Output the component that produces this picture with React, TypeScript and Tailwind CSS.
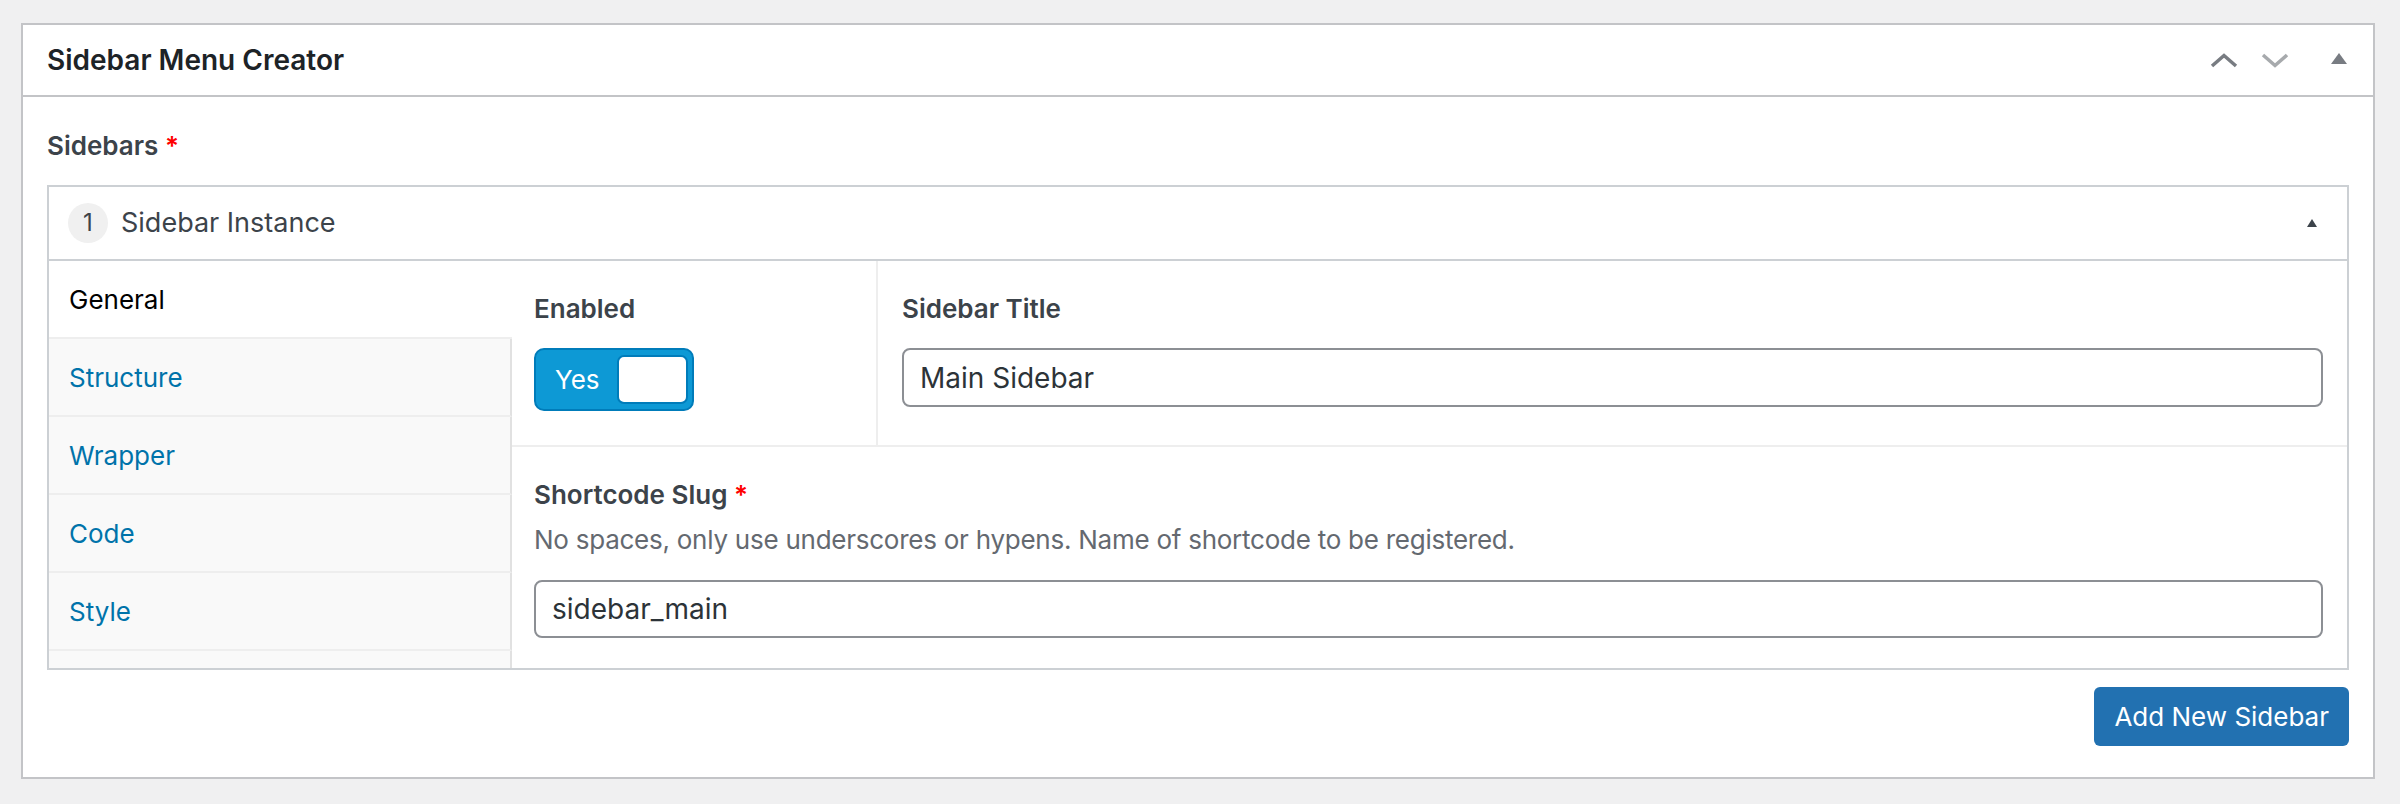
const tabs = ['General', 'Structure', 'Wrapper', 'Code', 'Style']

function ChevronUp({ color }: { color: string }) {
  return (
    <svg width="28" height="15" viewBox="0 0 28 15" fill="none">
      <path d="M2 13 L14 2.5 L26 13" stroke={color} strokeWidth="3.5" />
    </svg>
  )
}

function ChevronDown({ color }: { color: string }) {
  return (
    <svg width="28" height="15" viewBox="0 0 28 15" fill="none">
      <path d="M2 2 L14 12.5 L26 2" stroke={color} strokeWidth="3.5" />
    </svg>
  )
}

function Triangle({ w, h, color }: { w: number; h: number; color: string }) {
  return (
    <svg width={w} height={h} viewBox={`0 0 ${w} ${h}`}>
      <polygon points={`0,${h} ${w / 2},0 ${w},${h}`} fill={color} />
    </svg>
  )
}

export default function App() {
  return (
    <div className="min-h-screen bg-[#f0f0f1] pt-[23px] pl-[21px] pr-[25px] font-[Inter,sans-serif]">
      <div className="border-2 border-[#c3c4c7] bg-white">
        {/* Header */}
        <div className="flex h-[72px] items-center justify-between border-b-2 border-[#c3c4c7] pl-[24px] pr-[26px]">
          <h2 className="text-[28px] font-semibold text-[#1d2327]">Sidebar Menu Creator</h2>
          <div className="flex items-center">
            <ChevronUp color="#787c82" />
            <div className="ml-[23px]">
              <ChevronDown color="#a7aaad" />
            </div>
            <div className="ml-[42px] mb-[3px]">
              <Triangle w={16} h={11} color="#787c82" />
            </div>
          </div>
        </div>

        {/* Body */}
        <div className="px-[24px] pt-[29px] pb-[31px]">
          <div className="mb-[19px] h-[40px] text-[26px] leading-[40px] font-semibold text-[#3c434a]">
            Sidebars <span className="text-[#ff0000]">*</span>
          </div>

          <div className="border-2 border-[#ccd0d4]">
            {/* Instance header */}
            <div className="flex h-[74px] items-center border-b-2 border-[#ccd0d4] pl-[19px] pr-[30px]">
              <div className="flex h-[40px] w-[40px] items-center justify-center rounded-full bg-[#f0f0f0] text-[24px] text-[#3c434a]">
                1
              </div>
              <span className="ml-[13px] text-[27px] text-[#3c434a]">Sidebar Instance</span>
              <div className="ml-auto">
                <Triangle w={10} h={8} color="#3c434a" />
              </div>
            </div>

            <div className="flex">
              {/* Tabs */}
              <div className="flex w-[463px] shrink-0 flex-col bg-[#f9f9f9]">
                {tabs.map((t, i) => (
                  <div
                    key={t}
                    className={`flex h-[78px] items-center border-b-2 border-b-[#eeeeee] pl-[20px] text-[26px] ${
                      i === 0
                        ? 'bg-white text-black border-b-[#e1e1e1]'
                        : 'border-r-2 border-r-[#e1e1e1] text-[#0073aa]'
                    }`}
                  >
                    {t}
                  </div>
                ))}
                <div className="flex-1 border-r-2 border-r-[#e1e1e1]" />
              </div>

              {/* Fields */}
              <div className="flex-1">
                <div className="flex border-b-2 border-[#eeeeee]">
                  <div className="w-[366px] shrink-0 border-r-2 border-[#eeeeee] px-[22px] pt-[30px] pb-[34px]">
                    <div className="h-[36px] text-[26px] leading-[36px] font-semibold text-[#3c434a]">Enabled</div>
                    <div className="mt-[21px] flex h-[63px] w-[160px] items-center rounded-[10px] border-2 border-[#007cba] bg-[#0d99d5] pl-[19px] pr-[4px]">
                      <span className="text-[26px] text-white">Yes</span>
                      <div className="ml-auto h-[49px] w-[71px] rounded-[7px] border-2 border-[#007cba] bg-white" />
                    </div>
                  </div>
                  <div className="flex-1 px-[24px] pt-[30px]">
                    <div className="h-[36px] text-[26px] leading-[36px] font-semibold text-[#3c434a]">Sidebar Title</div>
                    <div className="mt-[21px] flex h-[59px] items-center rounded-[8px] border-2 border-[#8c8f94] px-[16px] text-[28px] text-[#2c3338]">
                      Main Sidebar
                    </div>
                  </div>
                </div>

                <div className="px-[22px] pt-[30px] pb-[30px] pr-[24px]">
                  <div className="h-[36px] text-[26px] leading-[36px] font-semibold text-[#3c434a]">
                    Shortcode Slug <span className="text-[#ff0000]">*</span>
                  </div>
                  <div className="mt-[9px] h-[36px] text-[26px] leading-[36px] tracking-[-0.25px] text-[#646970]">
                    No spaces, only use underscores or hypens. Name of shortcode to be registered.
                  </div>
                  <div className="mt-[22px] flex h-[58px] items-center rounded-[8px] border-2 border-[#8c8f94] px-[16px] text-[28px] text-[#2c3338]">
                    sidebar_main
                  </div>
                </div>
              </div>
            </div>
          </div>

          <div className="mt-[17px] flex justify-end">
            <button className="h-[59px] rounded-[6px] bg-[#2271b1] px-[20px] text-[26px] text-white">
              Add New Sidebar
            </button>
          </div>
        </div>
      </div>
    </div>
  )
}
